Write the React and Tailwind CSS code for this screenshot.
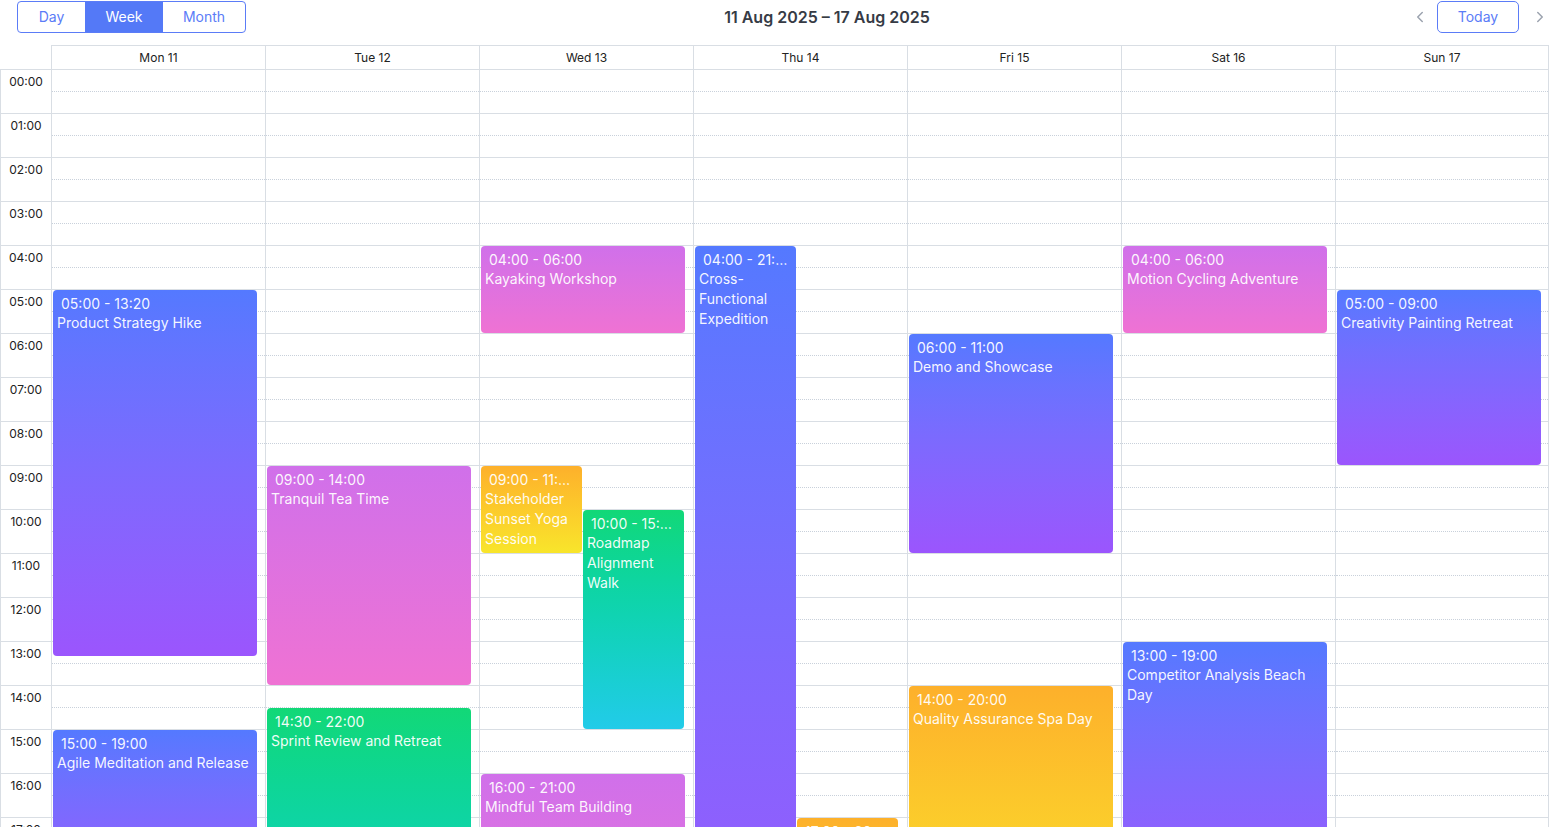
import { ChevronLeft, ChevronRight } from "lucide-react";

const days = ["Mon 11", "Tue 12", "Wed 13", "Thu 14", "Fri 15", "Sat 16", "Sun 17"];
const hours = Array.from({ length: 24 }, (_, i) => i);

const gradients = {
  blue: "bg-linear-to-b from-[#5479ff] to-[#9b55fd]",
  pink: "bg-linear-to-b from-[#d070ea] to-[#ef72d3]",
  green: "bg-linear-to-b from-[#12d877] to-[#22cbe9]",
  orange: "bg-linear-to-b from-[#fdb02b] to-[#f8e52b]",
};

const events = [
  { day: 0, start: 5, end: 13 + 20 / 60, time: "05:00 - 13:20", title: "Product Strategy Hike", color: "blue" },
  { day: 0, start: 15, end: 19, time: "15:00 - 19:00", title: "Agile Meditation and Release", color: "blue" },
  { day: 1, start: 9, end: 14, time: "09:00 - 14:00", title: "Tranquil Tea Time", color: "pink" },
  { day: 1, start: 14.5, end: 22, time: "14:30 - 22:00", title: "Sprint Review and Retreat", color: "green" },
  { day: 2, start: 4, end: 6, time: "04:00 - 06:00", title: "Kayaking Workshop", color: "pink" },
  { day: 2, start: 9, end: 11, time: "09:00 - 11:00", title: "Stakeholder Sunset Yoga Session", color: "orange", col: 0, cols: 2 },
  { day: 2, start: 10, end: 15, time: "10:00 - 15:00", title: "Roadmap Alignment Walk", color: "green", col: 1, cols: 2 },
  { day: 2, start: 16, end: 21, time: "16:00 - 21:00", title: "Mindful Team Building", color: "pink" },
  { day: 3, start: 4, end: 21.5, time: "04:00 - 21:30", title: "Cross-Functional Expedition", color: "blue", col: 0, cols: 2 },
  { day: 3, start: 17, end: 20, time: "17:00 - 20:00", title: "Innovation Picnic", color: "orange", col: 1, cols: 2 },
  { day: 4, start: 6, end: 11, time: "06:00 - 11:00", title: "Demo and Showcase", color: "blue" },
  { day: 4, start: 14, end: 20, time: "14:00 - 20:00", title: "Quality Assurance Spa Day", color: "orange" },
  { day: 5, start: 4, end: 6, time: "04:00 - 06:00", title: "Motion Cycling Adventure", color: "pink" },
  { day: 5, start: 13, end: 19, time: "13:00 - 19:00", title: "Competitor Analysis Beach Day", color: "blue" },
  { day: 6, start: 5, end: 9, time: "05:00 - 09:00", title: "Creativity Painting Retreat", color: "blue" },
];

function EventCard({ ev }) {
  const cols = ev.cols || 1;
  const col = ev.col || 0;
  const style = {
    top: ev.start * 44,
    height: (ev.end - ev.start) * 44 - 1,
    left: 1 + col * 102,
    width: cols === 1 ? 204 : 101,
  };
  return (
    <div
      style={style}
      className={`absolute rounded overflow-hidden px-1 pt-[4px] text-white/95 text-sm leading-5 ${gradients[ev.color]}`}
    >
      <div className="pl-1 pr-1 leading-[19px] whitespace-nowrap overflow-hidden text-ellipsis">{ev.time}</div>
      <div>{ev.title}</div>
    </div>
  );
}

export default function App() {
  return (
    <div className="h-screen overflow-hidden bg-white font-['Inter',sans-serif] text-[#333]">
      {/* Toolbar */}
      <div className="h-[45px] flex items-start justify-between pl-[17px] pt-px">
        <div className="flex h-[32px] border border-[#5b7cf7] rounded-[4px] overflow-hidden text-sm">
          <button className="w-[67px] text-[#5b7cf7]">Day</button>
          <button className="w-[78px] bg-[#5479f7] text-white">Week</button>
          <button className="w-[82px] text-[#5b7cf7]">Month</button>
        </div>
        <div className="pt-[4px] text-base font-semibold text-[#363b45]">11 Aug 2025 – 17 Aug 2025</div>
        <div className="flex items-center h-[32px]">
          <button className="w-[24px] h-[32px] flex items-center justify-center text-[#9ca3af]">
            <ChevronLeft size={18} strokeWidth={2} />
          </button>
          <button className="ml-[5px] w-[82px] h-[32px] border border-[#5b7cf7] rounded-[5px] text-sm text-[#5b7cf7]">
            Today
          </button>
          <button className="ml-[9px] w-[24px] h-[32px] flex items-center justify-center text-[#9ca3af]">
            <ChevronRight size={18} strokeWidth={2} />
          </button>
        </div>
      </div>

      {/* Day header */}
      <div className="flex">
        <div className="w-[51px] h-[25px] border-b border-[#d9dee4]" />
        {days.map((d, i) => (
          <div
            key={d}
            className={`w-[214px] h-[25px] border-t border-b border-l border-[#d9dee4] flex items-center justify-center text-xs text-[#222] ${i === 6 ? "border-r" : ""}`}
          >
            {d}
          </div>
        ))}
      </div>

      {/* Body */}
      <div className="flex">
        <div className="w-[51px] border-l border-[#d9dee4]">
          {hours.map((h) => (
            <div key={h} className="h-[44px] border-b border-[#d9dee4] pt-[4px] text-center text-xs text-[#222]">
              {String(h).padStart(2, "0")}:00
            </div>
          ))}
        </div>
        {days.map((d, di) => (
          <div
            key={d}
            className={`w-[214px] border-l border-[#d9dee4] ${di === 6 ? "border-r" : ""}`}
          >
            <div className="relative">
              {hours.map((h) => (
                <div key={h} className="h-[44px] border-b border-[#d9dee4]">
                  <div className="h-[22px] border-b border-dotted border-[#c9d1db]" />
                </div>
              ))}
              {events
                .filter((e) => e.day === di)
                .map((ev) => (
                  <EventCard key={ev.title} ev={ev} />
                ))}
            </div>
          </div>
        ))}
      </div>
    </div>
  );
}
